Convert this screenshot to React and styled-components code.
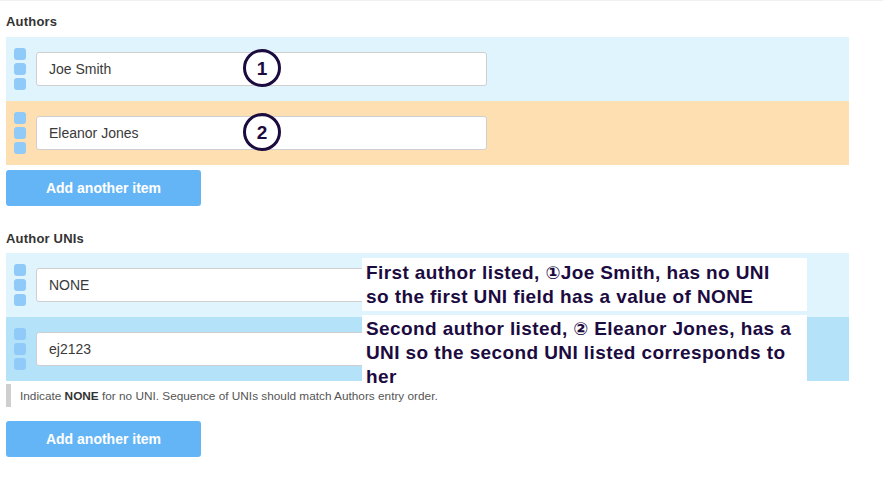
import React from "react";
import styled, { createGlobalStyle } from "styled-components";

const Global = createGlobalStyle`
  html, body { margin: 0; padding: 0; background: #fff; }
  body { font-family: "Liberation Sans", Arial, "DejaVu Sans", sans-serif; color: #333; }
  * { box-sizing: border-box; }
`;

const Page = styled.div`
  width: 883px;
  height: 479px;
  border-top: 1px solid #f0f0f0;
  padding: 0 34px 0 6px;
  overflow: hidden;
`;

const Section = styled.section`
  display: flex;
  flex-direction: column;
  align-items: flex-start;
  padding-top: ${(p) => p.$top}px;
`;

const Label = styled.div`
  font-size: 13px;
  font-weight: bold;
  line-height: 18px;
  letter-spacing: 0.2px;
  color: #333;
  margin-bottom: ${(p) => p.$gap}px;
`;

const List = styled.div`
  position: relative;
  width: 843px;
  display: flex;
  flex-direction: column;
`;

const Row = styled.div`
  display: flex;
  align-items: center;
  gap: 10px;
  height: 64px;
  padding-left: 8px;
  background: ${(p) => p.$bg};
`;

const Handle = styled.div`
  display: grid;
  grid-template-rows: repeat(3, 12px);
  gap: 3px;
  width: 12px;
`;

const Dot = styled.span`
  display: block;
  width: 12px;
  height: 12px;
  border-radius: 3px;
  background: #90caf9;
`;

const FieldWrap = styled.div`
  position: relative;
  width: 451px;
  height: 34px;
`;

const Input = styled.input`
  width: 100%;
  height: 100%;
  border: 1px solid #cfcfcf;
  border-radius: 3px;
  background: #fff;
  padding: 0 12px;
  font-family: "Liberation Sans", Arial, sans-serif;
  font-size: 14px;
  color: #3a3a3a;
  outline: none;
`;

const Marker = styled.div`
  position: absolute;
  left: 207px;
  top: -3px;
  width: 38px;
  height: 38px;
  border: 3px solid #1c0b3f;
  border-radius: 50%;
  display: flex;
  align-items: center;
  justify-content: center;
  font-size: 19px;
  font-weight: bold;
  color: #1c0b3f;
  line-height: 1;
`;

const Button = styled.button`
  margin-top: ${(p) => p.$top}px;
  width: 195px;
  height: 36px;
  border: none;
  border-radius: 3px;
  background: #64b5f6;
  color: #fff;
  font-family: "Liberation Sans", Arial, sans-serif;
  font-size: 14px;
  font-weight: bold;
  cursor: pointer;
`;

const Help = styled.div`
  margin-top: 3px;
  height: 23px;
  border-left: 5px solid #cfcfcf;
  padding-left: 9px;
  display: flex;
  align-items: center;
  font-size: 11.8px;
  color: #555;
  b { color: #333; }
`;

const Note = styled.div`
  position: absolute;
  left: 356px;
  top: ${(p) => p.$top}px;
  width: 445px;
  min-height: ${(p) => p.$h}px;
  background: #fff;
  padding: ${(p) => p.$pad}px 13px 0 4px;
  font-family: "Liberation Sans", Arial, "DejaVu Sans", sans-serif;
  font-size: 19px;
  font-weight: bold;
  line-height: 24px;
  letter-spacing: 0.4px;
  color: #1c0b3f;
`;

const Circ = styled.span`
  font-family: "DejaVu Sans", "Noto Sans CJK SC", sans-serif;
  font-size: 18px;
  letter-spacing: 0;
`;

export default function App() {
  return (
    <>
      <Global />
      <Page>
        <Section $top={12}>
          <Label $gap={6}>Authors</Label>
          <List>
            <Row $bg="#e0f4fd">
              <Handle><Dot /><Dot /><Dot /></Handle>
              <FieldWrap>
                <Input defaultValue="Joe Smith" />
                <Marker>1</Marker>
              </FieldWrap>
            </Row>
            <Row $bg="#fddfb2">
              <Handle><Dot /><Dot /><Dot /></Handle>
              <FieldWrap>
                <Input defaultValue="Eleanor Jones" />
                <Marker>2</Marker>
              </FieldWrap>
            </Row>
          </List>
          <Button $top={5}>Add another item</Button>
        </Section>
        <Section $top={24}>
          <Label $gap={5}>Author UNIs</Label>
          <List>
            <Row $bg="#e0f4fd">
              <Handle><Dot /><Dot /><Dot /></Handle>
              <FieldWrap>
                <Input defaultValue="NONE" />
              </FieldWrap>
            </Row>
            <Row $bg="#b4e2f9">
              <Handle><Dot /><Dot /><Dot /></Handle>
              <FieldWrap>
                <Input defaultValue="ej2123" />
              </FieldWrap>
            </Row>
            <Note $top={5} $h={53} $pad={3}>
              First author listed, <Circ>①</Circ>Joe Smith, has no UNI so the first UNI field has a value of NONE
            </Note>
            <Note $top={62} $h={72} $pad={2}>
              Second author listed, <Circ>②</Circ> Eleanor Jones, has a UNI so the second UNI listed corresponds to her
            </Note>
          </List>
          <Help>
            <span>Indicate <b>NONE</b> for no UNI. Sequence of UNIs should match Authors entry order.</span>
          </Help>
          <Button $top={14}>Add another item</Button>
        </Section>
      </Page>
    </>
  );
}
